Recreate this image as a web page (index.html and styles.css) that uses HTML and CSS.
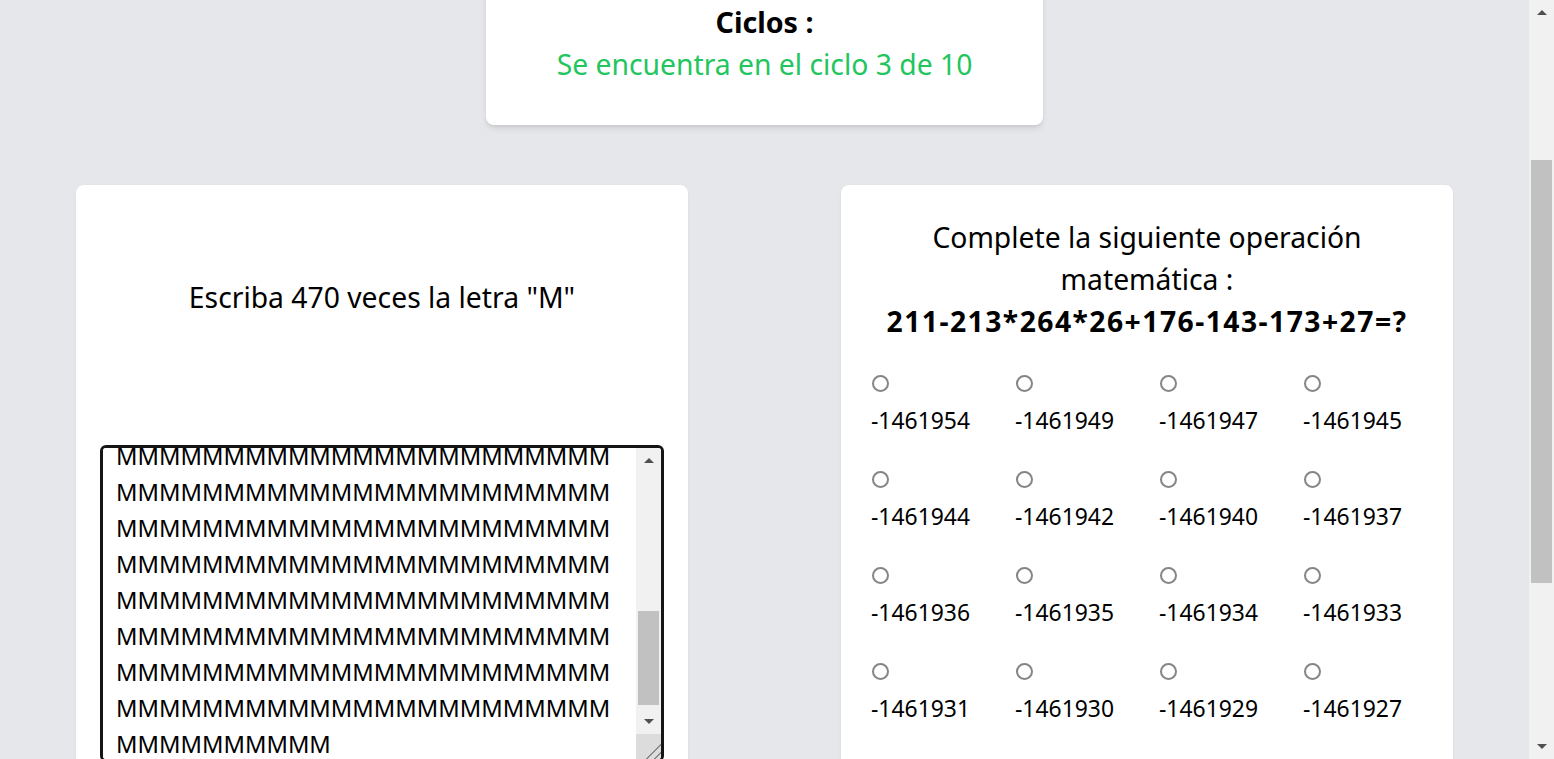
FILE: index.html
```html
<!DOCTYPE html>
<html lang="es">
<head>
<meta charset="utf-8">
<title>Ciclos</title>
<link rel="stylesheet" href="styles.css">
</head>
<body>
<main class="page">
  <section class="cycle-wrap">
    <div class="cycle-card">
      <h2 class="cycle-title">Ciclos :</h2>
      <p class="cycle-status">Se encuentra en el ciclo 3 de 10</p>
    </div>
  </section>
  <section class="tasks">
    <div class="card task-write">
      <p class="task-title">Escriba 470 veces la letra "M"</p>
      <div class="answer-box">
        <textarea class="answer" id="answer" spellcheck="false">MMMMMMMMMMMMMMMMMMMMMMMMMMMMMMMMMMMMMMMMMMMMMMMMMMMMMMMMMMMMMMMMMMMMMMMMMMMMMMMMMMMMMMMMMMMMMMMMMMMMMMMMMMMMMMMMMMMMMMMMMMMMMMMMMMMMMMMMMMMMMMMMMMMMMMMMMMMMMMMMMMMMMMMMMMMMMMMMMMMMMMMMMMMMMMMMMMMMMMMMMMMMMMMMMMMMMMMMMMMMMMMMMMMMMMMMMMMMMMMMMMMMMMMMMMMMMMMMMMMMMMMMMMMMMMMMMMMMMMMMMMMMMMMMMMMMMMMMMMMMMMMMMMMMMMMMMMMMMMMMMMMMMMMMMMMMMMMMMMMMMMMMMMMMMMMMMMMMMMMMMMMMMMMMMMMMMMMMMMMMMMMMMMMMMMMMMMMMMMMMMMMMMMMMMMMMMMMMMMMMMMMMMMMMMMMMMMMMMMMMMMMMMMMMMMMMMMMMMMMMMMMMMMMMMMMMMMMMMMMMMMMMMMMMMMMMMMMMMMMMMM</textarea>
        <div class="scrollbar ta-scrollbar" aria-hidden="true">
          <div class="sb-btn sb-up"></div>
          <div class="sb-track"><div class="sb-thumb ta-thumb"></div></div>
          <div class="sb-btn sb-down"></div>
          <div class="sb-resizer"></div>
        </div>
      </div>
    </div>
    <div class="card task-math">
      <p class="math-title">Complete la siguiente operación matemática :</p>
      <p class="math-expr">211-213*264*26+176-143-173+27=?</p>
      <div class="options">
        <label class="option"><input type="radio" name="r"><span>-1461954</span></label>
        <label class="option"><input type="radio" name="r"><span>-1461949</span></label>
        <label class="option"><input type="radio" name="r"><span>-1461947</span></label>
        <label class="option"><input type="radio" name="r"><span>-1461945</span></label>
        <label class="option"><input type="radio" name="r"><span>-1461944</span></label>
        <label class="option"><input type="radio" name="r"><span>-1461942</span></label>
        <label class="option"><input type="radio" name="r"><span>-1461940</span></label>
        <label class="option"><input type="radio" name="r"><span>-1461937</span></label>
        <label class="option"><input type="radio" name="r"><span>-1461936</span></label>
        <label class="option"><input type="radio" name="r"><span>-1461935</span></label>
        <label class="option"><input type="radio" name="r"><span>-1461934</span></label>
        <label class="option"><input type="radio" name="r"><span>-1461933</span></label>
        <label class="option"><input type="radio" name="r"><span>-1461931</span></label>
        <label class="option"><input type="radio" name="r"><span>-1461930</span></label>
        <label class="option"><input type="radio" name="r"><span>-1461929</span></label>
        <label class="option"><input type="radio" name="r"><span>-1461927</span></label>
        <label class="option"><input type="radio" name="r"><span>-1461926</span></label>
        <label class="option"><input type="radio" name="r"><span>-1461924</span></label>
        <label class="option"><input type="radio" name="r"><span>-1461921</span></label>
      </div>
    </div>
  </section>
</main>
<div class="scrollbar page-scrollbar" aria-hidden="true">
  <div class="sb-btn sb-up"></div>
  <div class="sb-track"><div class="sb-thumb page-thumb"></div></div>
  <div class="sb-btn sb-down"></div>
</div>
<script src="script.js"></script>
</body>
</html>
```

FILE: styles.css
```css
html, body {
  margin: 0;
  padding: 0;
}
body {
  background: #e5e7eb;
  font-family: "Noto Sans", "Open Sans", sans-serif;
  color: #000;
  overflow-x: hidden;
}
.page {
  box-sizing: border-box;
  width: 1529px;
  min-height: 1272px;
  padding-top: 24px;
}
.cycle-wrap {
  display: flex;
  justify-content: center;
}
.cycle-card {
  width: 557px;
  box-sizing: border-box;
  background: #fff;
  border-radius: 8px;
  box-shadow: 0 4px 6px -1px rgba(0,0,0,.1), 0 2px 4px -2px rgba(0,0,0,.1);
  padding: 219px 0 40px;
  text-align: center;
}
.cycle-title {
  margin: 0;
  font-size: 28.6px;
  line-height: 42px;
  font-weight: 700;
}
.cycle-status {
  margin: 0;
  font-size: 28.3px;
  line-height: 42px;
  color: #22c55e;
}
.tasks {
  display: grid;
  grid-template-columns: 612px 612px;
  gap: 153px;
  padding: 0 76px;
  margin-top: 60px;
}
.card {
  background: #fff;
  border-radius: 8px;
  box-shadow: 0 1px 3px rgba(0,0,0,.06);
  box-sizing: border-box;
}
.task-write {
  padding: 24px;
}
.task-title {
  margin: 67px 0 127px;
  text-align: center;
  font-size: 28.3px;
  line-height: 42px;
}
.answer-box {
  display: flex;
  height: 317px;
  box-sizing: border-box;
  border: 3px solid #151515;
  border-radius: 6px;
  overflow: hidden;
  background: #fff;
}
.answer {
  flex: 1;
  min-width: 0;
  height: 100%;
  box-sizing: border-box;
  margin: 0;
  border: 0;
  padding: 12px 14px 6px 13px;
  font-family: "Noto Sans", sans-serif;
  font-size: 23.7px;
  line-height: 36px;
  color: #000;
  background: #fff;
  outline: none;
  resize: none;
  overflow: hidden;
}
.task-math {
  padding: 31px 30px 32px;
}
.math-title {
  margin: 0;
  text-align: center;
  font-size: 28.3px;
  line-height: 42px;
}
.math-expr {
  margin: 0;
  text-align: center;
  font-size: 28.3px;
  line-height: 42px;
  font-weight: 700;
  letter-spacing: 1.45px;
}
.options {
  margin-top: 23px;
  display: grid;
  grid-template-columns: repeat(4, 120px);
  column-gap: 24px;
  row-gap: 22px;
}
.option {
  display: flex;
  flex-direction: column;
  align-items: flex-start;
  font-size: 22.9px;
  line-height: 36px;
}
.option input {
  appearance: none;
  -webkit-appearance: none;
  display: block;
  width: 17px;
  height: 17px;
  box-sizing: border-box;
  margin: 10px 0 11px 1px;
  border: 2px solid #858585;
  border-radius: 50%;
  background: #fff;
}

/* scrollbars */
.scrollbar {
  width: 25px;
  display: flex;
  flex-direction: column;
  background: #f1f1f1;
}
.page-scrollbar {
  position: fixed;
  top: 0;
  right: 0;
  height: 100vh;
}
.ta-scrollbar {
  flex: none;
}
.sb-btn {
  flex: none;
  height: 25px;
  display: flex;
  align-items: center;
  justify-content: center;
}
.sb-up::before {
  content: "";
  border-left: 5px solid transparent;
  border-right: 5px solid transparent;
  border-bottom: 5px solid #505050;
}
.sb-down::before {
  content: "";
  border-left: 5px solid transparent;
  border-right: 5px solid transparent;
  border-top: 5px solid #505050;
}
.sb-track {
  flex: 1;
  padding: 0 2px;
}
.sb-thumb {
  background: #c1c1c1;
}
.page-thumb {
  margin-top: 135px;
  height: 423px;
}
.ta-thumb {
  margin-top: 138px;
  height: 94px;
}
.sb-resizer {
  flex: none;
  height: 25px;
  background-color: #dcdcdc;
  background-image: linear-gradient(to top left, transparent 0 12%, #8a8a8a 12% 16%, transparent 16% 27%, #8a8a8a 27% 31%, transparent 31%);
}
```

FILE: script.js
```js
(function () {
  var ta = document.getElementById('answer');
  if (ta.value.length !== 470) {
    ta.value = new Array(471).join('M');
  }
  ta.focus({ preventScroll: true });
  ta.setSelectionRange(470, 470);
  ta.scrollTop = 454;
  window.scrollTo(0, 242);
})();
```
